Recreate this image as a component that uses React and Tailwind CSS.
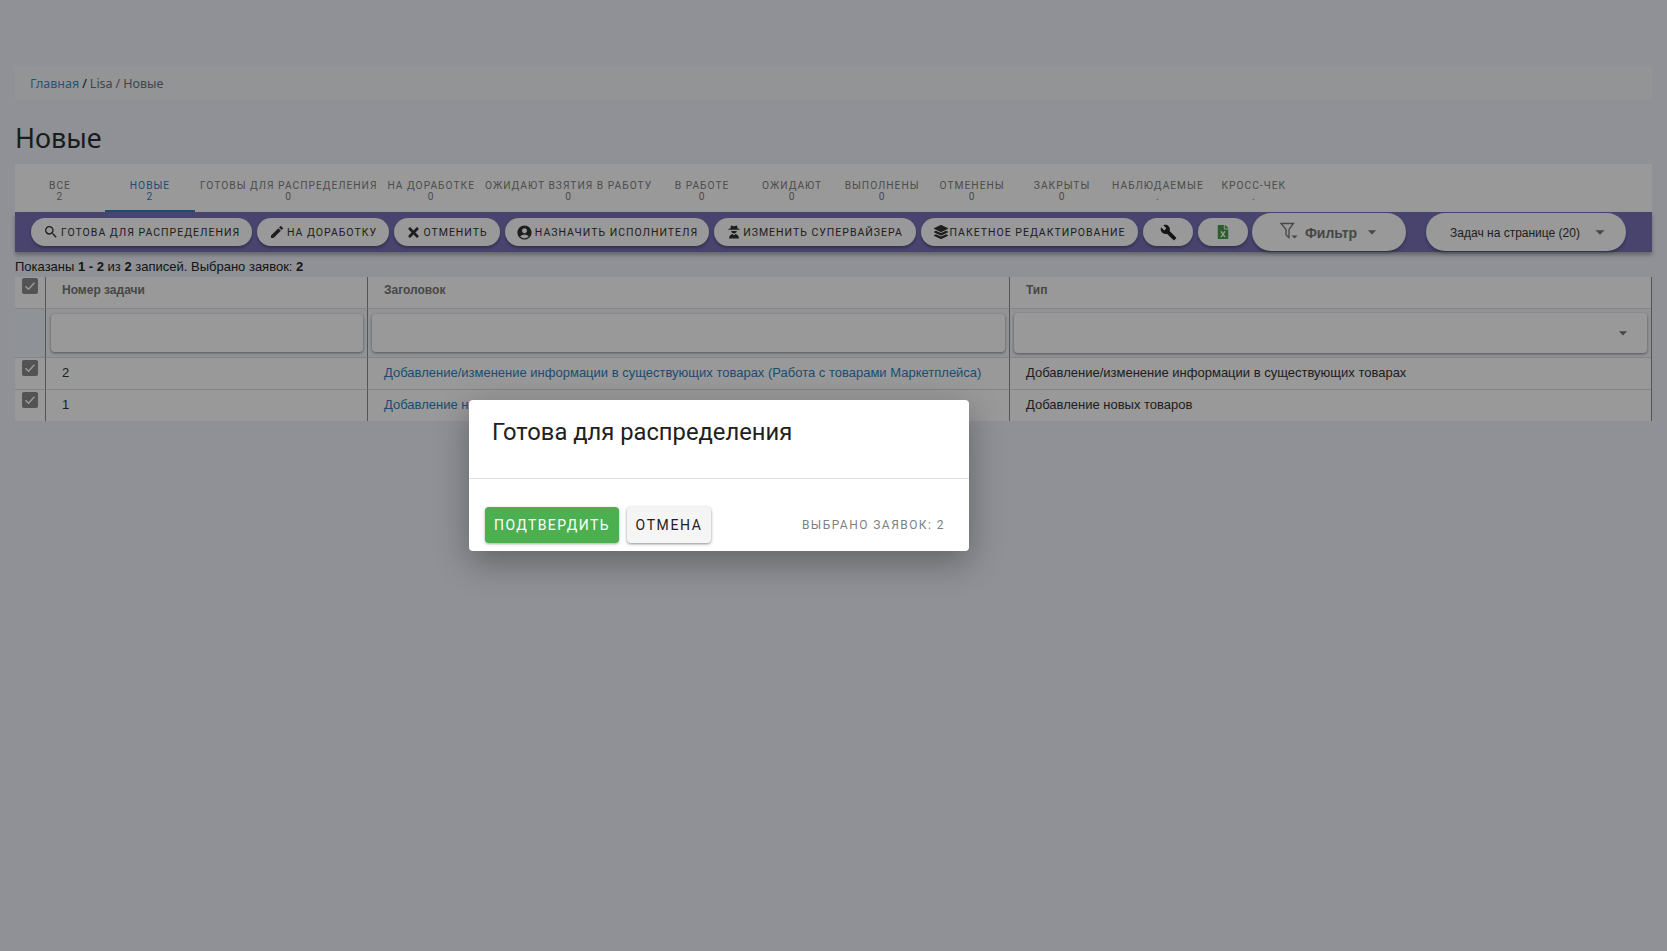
// App.jsx - task list with confirm dialog on top
import React from 'react';
import { MdSearch, MdEdit, MdAccountCircle, MdBuild, MdArrowDropDown } from 'react-icons/md';
import { FaTimes, FaLayerGroup, FaFileExcel } from 'react-icons/fa';

const tabs = [
  { label: 'Все', count: '2' },
  { label: 'Новые', count: '2', active: true },
  { label: 'Готовы для распределения', count: '0' },
  { label: 'На доработке', count: '0' },
  { label: 'Ожидают взятия в работу', count: '0' },
  { label: 'В работе', count: '0' },
  { label: 'Ожидают', count: '0' },
  { label: 'Выполнены', count: '0' },
  { label: 'Отменены', count: '0' },
  { label: 'Закрыты', count: '0' },
  { label: 'Наблюдаемые', count: '.' },
  { label: 'Кросс-чек', count: '.' },
];

// hat, face and shoulders
const SupervisorIcon = () => (
  <svg viewBox="0 0 14 14" className="w-[14px] h-[14px]" fill="currentColor">
    <path d="M4 .5l3 .8 3-.8.6 3 2 .5v.8H1.400V4l2-.5z" />
    <path d="M4.200 6h5.600c-.2 1.600-1.200 2.500-2.800 2.500S4.400 7.600 4.200 6z" />
    <path d="M2 13.500c0-2.600 1.700-4.300 3.400-4.600L7 10.200l1.600-1.300c1.700.3 3.400 2 3.400 4.600z" />
  </svg>
);

const actions = [
  { label: 'Готова для распределения', icon: <MdSearch className="w-[16px] h-[16px]" />, width: 'w-[221px]' },
  { label: 'На доработку', icon: <MdEdit className="w-[16px] h-[16px]" />, width: 'w-[132px]' },
  { label: 'Отменить', icon: <FaTimes className="w-[15px] h-[15px]" />, width: 'w-[106px]' },
  { label: 'Назначить исполнителя', icon: <MdAccountCircle className="w-[17px] h-[17px]" />, width: 'w-[204px]' },
  { label: 'Изменить супервайзера', icon: <SupervisorIcon />, width: 'w-[202px]' },
  { label: 'Пакетное редактирование', icon: <FaLayerGroup className="w-[14px] h-[14px]" />, width: 'w-[217px]' },
];

const Check = () => (
  <span className="w-[16px] h-[16px] rounded-[2px] bg-[#8a8a8a] flex items-center justify-center">
    <svg viewBox="0 0 16 16" className="w-[16px] h-[16px]">
      <path d="M3.500 8.200l3 3 6-6.400" fill="none" stroke="#ffffff" strokeWidth="1.500" />
    </svg>
  </span>
);

const App = () => {
  return (
    <div className="relative h-[951px] overflow-hidden bg-[#eef2fa] px-[15px] pt-[66px] font-['Liberation_Sans',sans-serif] text-[13px] text-[#212529]">
      {/* breadcrumb */}
      <div className="h-[34px] flex items-center rounded-[3px] bg-[#f6f7f8] px-[15px] pt-[2px] font-['Noto_Sans',sans-serif] text-[12.500px] text-[#6c757d]">
        <span className="text-[#3a8fc9]">Главная</span>
        <span className="text-[#212529] mx-[3px]">/</span>
        <span>Lisa</span>
        <span className="mx-[3px]">/</span>
        <span>Новые</span>
      </div>

      <h1 className="mt-[18px] h-[46px] leading-[39px] font-['Noto_Sans',sans-serif] text-[27px] font-normal text-[#2b2f33]">Новые</h1>

      {/* tabs */}
      <div className="h-[48px] flex bg-white font-['Roboto',sans-serif] text-[10.240px] leading-[11.500px] tracking-[1px] uppercase text-[#808080]">
        {tabs.map((tab) => (
          <div
            key={tab.label}
            className={`min-w-[90px] px-[5px] pt-[15.500px] text-center whitespace-nowrap ${tab.active ? 'border-b-2 border-[#2f7fc4] text-[#2f7fc4]' : ''}`}
          >
            <div>{tab.label}</div>
            <div>{tab.count}</div>
          </div>
        ))}
      </div>

      {/* actions */}
      <div className="h-[40px] flex items-center pl-[16px] bg-[#7872b8] shadow-[0_3px_4px_rgba(0,0,0,0.3)] font-['Roboto',sans-serif]">
        <div className="flex items-center gap-[5px]">
          {actions.map((a) => (
            <button
              key={a.label}
              className={`${a.width} h-[28px] flex items-center justify-center gap-[2px] rounded-full bg-white text-[10.500px] tracking-[1px] uppercase text-[#333333] shadow-[0_2px_3px_rgba(0,0,0,0.3)] whitespace-nowrap`}
            >
              {a.icon}
              <span className="pt-[1px]">{a.label}</span>
            </button>
          ))}
          <button className="w-[50px] h-[28px] flex items-center justify-center rounded-full bg-white text-[#222222] shadow-[0_2px_3px_rgba(0,0,0,0.3)]">
            <MdBuild className="w-[17px] h-[17px]" />
          </button>
          <button className="w-[50px] h-[28px] flex items-center justify-center rounded-full bg-white text-[#43a047] shadow-[0_2px_3px_rgba(0,0,0,0.3)]">
            <FaFileExcel className="w-[12px] h-[14px]" />
          </button>
        </div>
        <button className="ml-[4px] w-[154px] h-[38px] flex items-center justify-center gap-[6px] pl-[3px] rounded-full bg-white font-['Liberation_Sans',sans-serif] text-[14px] font-bold text-[#777777] shadow-[0_2px_3px_rgba(0,0,0,0.3)]">
          <svg viewBox="0 0 20 20" className="w-[20px] h-[20px] -mt-[2px]">
            <path d="M2 2.500h12.500L10 8.500v8L7 14V8.500z" fill="none" stroke="#777777" strokeWidth="1.300" />
            <path d="M12.500 14.500h6l-3 3z" fill="#777777" />
          </svg>
          <span className="pt-[2px]">Фильтр</span>
          <MdArrowDropDown className="w-[20px] h-[20px] -ml-[1px]" />
        </button>
        <button className="ml-[20px] w-[200px] h-[38px] flex items-center justify-center gap-[9px] pl-[9px] rounded-full bg-white text-[12px] font-['Liberation_Sans',sans-serif] text-[#333333] shadow-[0_2px_3px_rgba(0,0,0,0.3)]">
          <span className="pt-[1px]">Задач на странице (20)</span>
          <MdArrowDropDown className="w-[22px] h-[22px] text-[#777777]" />
        </button>
      </div>

      <div className="h-[25px] leading-[30px]">
        Показаны <b>1 - 2</b> из <b>2</b> записей. Выбрано заявок: <b>2</b>
      </div>

      {/* table */}
      <div className="grid grid-cols-[31px_322px_642px_641px] bg-white border-r border-[#8c8c8c] text-[#333333]">
        <div className="h-[32px] border-b border-[#dddddd] border-r border-r-[#8c8c8c] pl-[7px] pt-[1px]"><Check /></div>
        <div className="h-[32px] border-b border-[#dddddd] border-r border-r-[#8c8c8c] pl-[16px] pb-[5px] flex items-center text-[12px] font-bold text-[#777777]">Номер задачи</div>
        <div className="h-[32px] border-b border-[#dddddd] border-r border-r-[#8c8c8c] pl-[16px] pb-[5px] flex items-center text-[12px] font-bold text-[#777777]">Заголовок</div>
        <div className="h-[32px] border-b border-[#dddddd] pl-[16px] pb-[5px] flex items-center text-[12px] font-bold text-[#777777]">Тип</div>

        <div className="h-[49px] bg-[#eff6fc] border-b border-[#dddddd] border-r border-r-[#8c8c8c]"></div>
        <div className="h-[49px] bg-[#f4f6fa] border-b border-[#dddddd] border-r border-r-[#8c8c8c] pl-[5px] pr-[4px] pt-[5px]">
          <div className="h-[38px] rounded-[4px] bg-white shadow-[0_1px_3px_rgba(0,0,0,0.45)]"></div>
        </div>
        <div className="h-[49px] bg-[#f4f6fa] border-b border-[#dddddd] border-r border-r-[#8c8c8c] pl-[4px] pr-[4px] pt-[5px]">
          <div className="h-[38px] rounded-[4px] bg-white shadow-[0_1px_3px_rgba(0,0,0,0.45)]"></div>
        </div>
        <div className="h-[49px] bg-[#f4f6fa] border-b border-[#dddddd] pl-[4px] pr-[4px] pt-[4px]">
          <div className="h-[40px] rounded-[4px] bg-white shadow-[0_1px_3px_rgba(0,0,0,0.45)] flex items-center justify-end pr-[14px] text-[#777777]">
            <MdArrowDropDown className="w-[20px] h-[20px]" />
          </div>
        </div>

        <div className="h-[32px] border-b border-[#dddddd] border-r border-r-[#8c8c8c] pl-[7px] pt-[2px]"><Check /></div>
        <div className="h-[32px] border-b border-[#dddddd] border-r border-r-[#8c8c8c] pl-[16px] pb-[2px] flex items-center">2</div>
        <div className="h-[32px] border-b border-[#dddddd] border-r border-r-[#8c8c8c] pl-[16px] pb-[2px] flex items-center text-[#2f7fc4] whitespace-nowrap">Добавление/изменение информации в существующих товарах (Работа с товарами Маркетплейса)</div>
        <div className="h-[32px] border-b border-[#dddddd] pl-[16px] pb-[2px] flex items-center">Добавление/изменение информации в существующих товарах</div>

        <div className="h-[31px] border-r border-r-[#8c8c8c] pl-[7px] pt-[2px]"><Check /></div>
        <div className="h-[31px] border-r border-r-[#8c8c8c] pl-[16px] pb-[2px] flex items-center">1</div>
        <div className="h-[31px] border-r border-r-[#8c8c8c] pl-[16px] pb-[2px] flex items-center text-[#2f7fc4] whitespace-nowrap">Добавление новых товаров</div>
        <div className="h-[31px] pl-[16px] pb-[2px] flex items-center">Добавление новых товаров</div>
      </div>

      {/* overlay + dialog */}
      <div className="absolute inset-0 bg-black/40"></div>
      <div className="absolute left-[469px] top-[400px] w-[500px] h-[151px] rounded-[4px] bg-white shadow-[0_11px_35px_rgba(0,0,0,0.32)] font-['Roboto',sans-serif]">
        <div className="h-[79px] border-b border-[#e0e0e0] pl-[23px] pt-[15px] text-[23.750px] leading-[34px] text-[#212121]">Готова для распределения</div>
        <div className="flex items-center pl-[16px] pr-[24px] pt-[28px]">
          <button className="w-[134px] h-[36px] rounded-[4px] bg-[#4caf50] text-white text-[14px] tracking-[1.400px] uppercase shadow-[0_1px_3px_rgba(0,0,0,0.35)]">Подтвердить</button>
          <button className="ml-[8px] w-[84px] h-[36px] rounded-[4px] bg-[#f5f5f5] text-[#212121] text-[14px] tracking-[1.600px] uppercase shadow-[0_1px_3px_rgba(0,0,0,0.45)]">Отмена</button>
          <span className="ml-auto text-[12px] tracking-[1.450px] uppercase text-[#808080]">Выбрано заявок: 2</span>
        </div>
      </div>
    </div>
  );
};

export default App;
